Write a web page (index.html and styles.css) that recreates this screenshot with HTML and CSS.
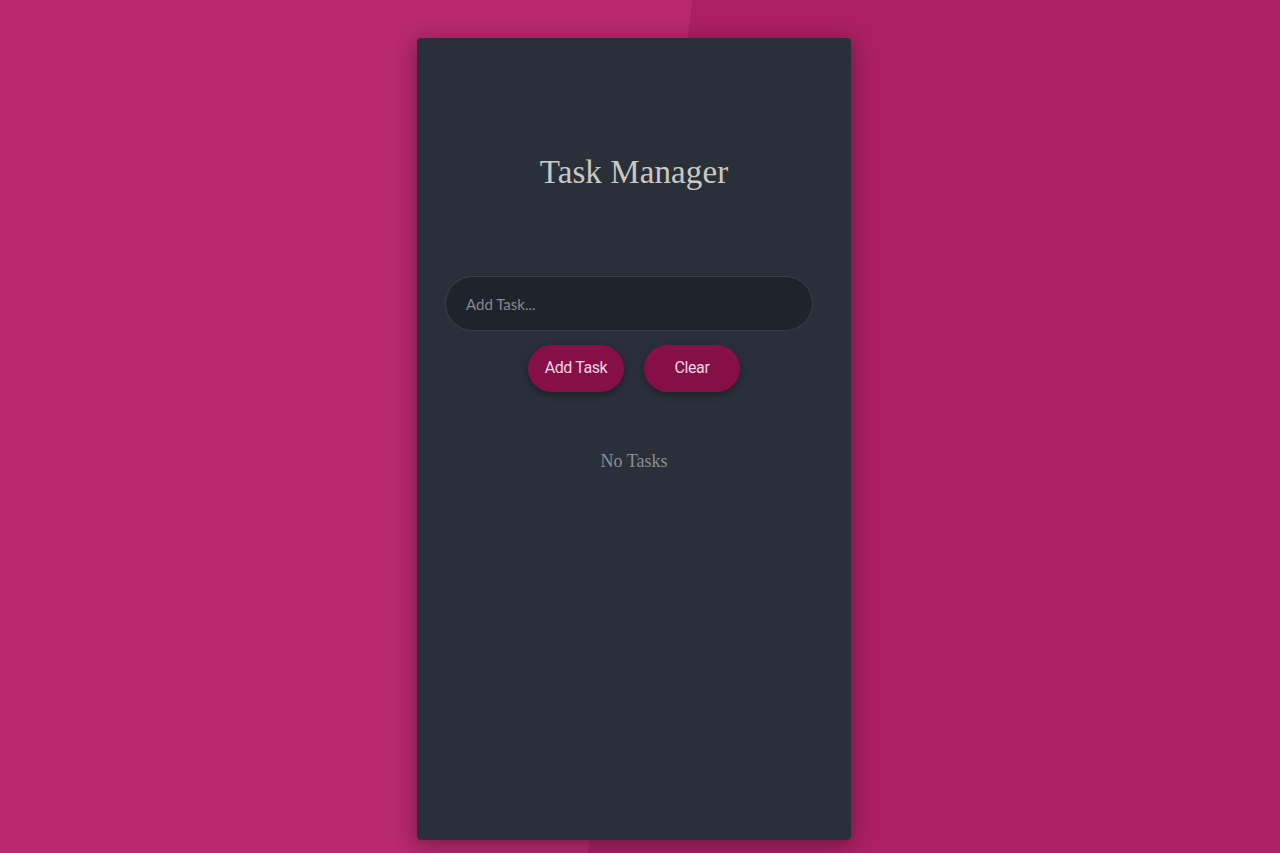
FILE: index.html
```html
<!DOCTYPE html>
<html lang="en">
<head>
<meta charset="utf-8">
<title>Task Manager</title>
<link rel="stylesheet" href="styles.css">
</head>
<body>
<main class="card">
  <h1 class="title">Task Manager</h1>
  <input class="task-input" type="text" placeholder="Add Task...">
  <div class="actions">
    <button class="btn">Add Task</button>
    <button class="btn">Clear</button>
  </div>
  <p class="empty">No Tasks</p>
</main>
</body>
</html>
```

FILE: styles.css
```css
html, body {
  margin: 0;
  height: 100%;
}
body {
  background: linear-gradient(97deg, #b8296d 50%, #ac2063 50%);
  display: flex;
  justify-content: center;
  align-items: flex-start;
  padding-right: 12px;
  box-sizing: border-box;
  overflow: hidden;
}
.card {
  margin-top: 38px;
  width: 434px;
  height: 802px;
  background: #2a303a;
  border-radius: 4px;
  box-shadow: 0 4px 22px rgba(20, 10, 20, 0.45);
  display: flex;
  flex-direction: column;
  align-items: center;
  box-sizing: border-box;
}
.title {
  margin: 114px 0 0;
  font-family: "Liberation Serif", "DejaVu Serif", serif;
  font-weight: 400;
  font-size: 33px;
  line-height: 40px;
  color: #c9c9c0;
  letter-spacing: 0.1px;
}
.task-input {
  margin: 84px 10px 0 0;
  width: 368px;
  height: 55px;
  box-sizing: border-box;
  border-radius: 28px;
  border: 1px solid #3a404a;
  background: #1f232b;
  padding: 0 20px;
  font-family: "Lato", "Open Sans", sans-serif;
  font-size: 15px;
  color: #cfd0d4;
  outline: none;
}
.task-input::placeholder {
  color: #868a90;
}
.actions {
  margin-top: 14px;
  display: flex;
  gap: 20px;
}
.btn {
  width: 96px;
  height: 47px;
  border: none;
  border-radius: 24px;
  background: #870f47;
  color: #eed6e2;
  font-family: "Roboto", "Liberation Sans", sans-serif;
  font-size: 16px;
  letter-spacing: -0.4px;
  padding: 0 0 2px;
  box-shadow: 0 3px 8px rgba(0, 0, 0, 0.35);
  cursor: pointer;
}
.empty {
  margin: 58px 0 0;
  font-family: "Liberation Serif", serif;
  font-size: 18px;
  line-height: 22px;
  color: #8b8e94;
}
```
